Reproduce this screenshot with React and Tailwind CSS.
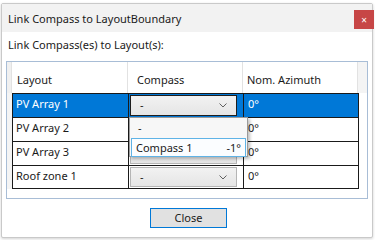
import React from "react";

const rows = [
  { name: "PV Array 1", compass: "-", az: "0°" },
  { name: "PV Array 2", compass: "-", az: "0°" },
  { name: "PV Array 3", compass: "-", az: "0°" },
  { name: "Roof zone 1", compass: "-", az: "0°" },
];

function Chevron() {
  return (
    <svg width="8" height="5" viewBox="0 0 8 5" className="shrink-0">
      <path d="M0.5 0.5 L4 4 L7.5 0.5" fill="none" stroke="#606060" strokeWidth="1" />
    </svg>
  );
}

function Combo({ value, focused }) {
  return (
    <div
      className={`flex items-center justify-between h-full pl-[9px] pr-[9px] bg-gradient-to-b from-[#f2f2f2] to-[#e5e5e5] border ${
        focused ? "border-[#1e1e1e]" : "border-[#b5b5b5]"
      }`}
    >
      <span className="text-[#1a1a1a]">{value}</span>
      <Chevron />
    </div>
  );
}

export default function App() {
  return (
    <div
      className="w-[375px] h-[240px] bg-white pt-[3px] pl-[1px] text-[11px] text-[#1a1a1a]"
      style={{ fontFamily: '"Noto Sans", "Open Sans", sans-serif' }}
    >
      <div className="relative w-[372px] h-[235px] border border-[#c9c9c9] rounded-[2px] bg-white shadow-[0_1px_3px_rgba(0,0,0,0.18)] flex flex-col">
        {/* Title bar */}
        <div className="h-[28px] bg-[#f2f2f2] flex items-start justify-between shrink-0">
          <span className="pl-[6px] pt-[7px] leading-[16px]">Link Compass to LayoutBoundary</span>
          <button className="mt-[6px] mr-[-2px] w-[20px] h-[19px] bg-[#c74646] text-white text-[10px] leading-none flex items-center justify-center">
            ×
          </button>
        </div>

        <div className="pl-[6px] pt-[5px] leading-[16px]">Link Compass(es) to Layout(s):</div>

        {/* Grid */}
        <div className="relative mt-[8px] ml-[4px] w-[362px] h-[138px] border border-[#a8bdd6] bg-white">
          {/* header */}
          <div className="flex h-[31px] bg-white">
            <div className="w-[5px] bg-[#f0f0f0] border-r border-[#e2e2e2]" />
            <div className="w-[116px] border-r border-[#e2e2e2] pl-[5px] pt-[10px] leading-[16px]">Layout</div>
            <div className="w-[115px] border-r border-[#e2e2e2] pl-[9px] pt-[10px] leading-[16px]">Compass</div>
            <div className="w-[115px] border-r border-[#e2e2e2] pl-[4px] pt-[10px] leading-[16px]">Nom. Azimuth</div>
            <div className="flex-1 bg-[#f4f4f4]" />
          </div>

          {/* rows */}
          {rows.map((r, i) => {
            const sel = i === 0;
            return (
              <div key={r.name} className="flex h-[24px]">
                <div className="w-[5px] bg-[#f4f4f4]" />
                <div
                  className={`w-[117px] border-l border-r border-t border-[#1a1a1a] pl-[3px] leading-[20px] ${
                    sel ? "bg-[#0078d7] text-white" : "bg-white"
                  } ${i === rows.length - 1 ? "border-b" : ""}`}
                >
                  {r.name}
                </div>
                <div
                  className={`w-[115px] border-r border-t border-[#1a1a1a] py-[1px] pl-[1px] pr-[6px] ${
                    sel ? "bg-[#0078d7]" : "bg-white"
                  } ${i === rows.length - 1 ? "border-b" : ""}`}
                >
                  <Combo value={r.compass} focused={sel} />
                </div>
                <div
                  className={`w-[115px] border-r border-t border-[#1a1a1a] pl-[4px] leading-[20px] ${
                    sel ? "bg-[#0078d7] text-white" : "bg-white"
                  } ${i === rows.length - 1 ? "border-b" : ""}`}
                >
                  {r.az}
                </div>
                <div className="flex-1" />
              </div>
            );
          })}

          {/* open dropdown list */}
          <div className="absolute left-[122px] top-[55px] w-[119px] h-[40px] bg-[#f7f7f7] border border-[#9a9a9a] shadow-[2px_2px_3px_rgba(0,0,0,0.25)] p-[1px] z-10">
            <div className="h-[19px] pl-[7px] leading-[18px]">-</div>
            <div className="h-[19px] flex items-center justify-between pl-[4px] pr-[4px] bg-[#fbfdff] border border-[#5fb3e6] leading-[17px]">
              <span>Compass 1</span>
              <span>-1°</span>
            </div>
          </div>
        </div>

        {/* footer */}
        <div className="flex justify-center pt-[9px] pl-[3px]">
          <button className="w-[77px] h-[20px] bg-[#e1e1e1] border border-[#0078d7] leading-[16px]">Close</button>
        </div>
      </div>
    </div>
  );
}
